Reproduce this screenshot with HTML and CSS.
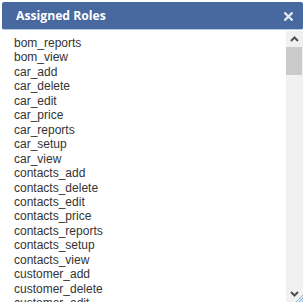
FILE: index.html
```html
<!DOCTYPE html>
<html>
<head>
<meta charset="utf-8">
<link rel="stylesheet" href="styles.css">
</head>
<body>
<div class="dialog">
  <div class="titlebar">
    <span class="title">Assigned Roles</span>
    <svg class="close" width="9" height="9" viewBox="0 0 9 9"><path d="M1.2 1.2 L7.8 7.8 M7.8 1.2 L1.2 7.8" stroke="#e4e8f0" stroke-width="2.3" stroke-linecap="square"/></svg>
  </div>
  <div class="content">
<textarea class="roles" readonly>bom_reports
bom_view
car_add
car_delete
car_edit
car_price
car_reports
car_setup
car_view
contacts_add
contacts_delete
contacts_edit
contacts_price
contacts_reports
contacts_setup
contacts_view
customer_add
customer_delete
customer_edit
customer_price
customer_reports
customer_setup
customer_view
dashboard_view
employee_add
employee_delete
employee_edit
employee_price
employee_reports
employee_setup
employee_view</textarea>
    <div class="scrollbar">
      <div class="sb-btn">
        <svg width="9" height="6" viewBox="0 0 9 6"><path d="M1 5 L4.5 1.5 L8 5" fill="none" stroke="#505050" stroke-width="2"/></svg>
      </div>
      <div class="sb-thumb"></div>
      <div class="sb-track"></div>
      <div class="sb-btn">
        <svg width="9" height="6" viewBox="0 0 9 6"><path d="M1 1 L4.5 4.5 L8 1" fill="none" stroke="#505050" stroke-width="2"/></svg>
      </div>
    </div>
    <svg class="grip" width="8" height="8" viewBox="0 0 8 8">
      <path d="M8 1 L1 8 M8 4 L4 8 M8 7 L7 8" stroke="#8fb4dc" stroke-width="1"/>
      <path d="M8 2.5 L2.5 8 M8 5.5 L5.5 8" stroke="#c9dcf0" stroke-width="1"/>
    </svg>
  </div>
</div>
</body>
</html>
```
FILE: styles.css
```css
html, body {
  margin: 0;
  padding: 0;
  background: #ffffff;
}
.dialog {
  width: 305px;
  height: 304px;
  box-sizing: border-box;
  padding: 2px 2px 2px 2px;
  display: flex;
  flex-direction: column;
  font-family: "Liberation Sans", Arial, sans-serif;
}
.titlebar {
  height: 27px;
  flex: none;
  background: #4868a0;
  border-radius: 2px;
  display: flex;
  align-items: center;
  justify-content: space-between;
  padding: 0 10px 0 14px;
  border-bottom: 1px solid #aecde8;
}
.title {
  color: #ffffff;
  font-family: "Open Sans", "Liberation Sans", sans-serif;
  font-weight: bold;
  font-size: 12.2px;
}
.close {
  display: block;
  margin-top: 1px;
}
.content {
  flex: 1;
  display: flex;
  margin-top: 1px;
  min-height: 0;
  position: relative;
}
.roles {
  flex: 1;
  min-width: 0;
  margin: 0;
  border: none;
  outline: none;
  resize: none;
  padding: 5px 4px 0 12px;
  font-family: "Liberation Sans", Arial, sans-serif;
  font-size: 12px;
  line-height: 14.45px;
  color: #333333;
  background: #ffffff;
  overflow: hidden;
  white-space: pre;
}
.scrollbar {
  width: 17px;
  flex: none;
  background: #f1f1f1;
  display: flex;
  flex-direction: column;
}
.sb-btn {
  height: 16px;
  flex: none;
  display: flex;
  align-items: center;
  justify-content: center;
}
.sb-thumb {
  height: 28px;
  flex: none;
  margin: 0 1px 0 0;
  background: #cbcbcb;
}
.sb-track {
  flex: 1;
}
.grip {
  position: absolute;
  right: 0;
  bottom: 0;
}
```
